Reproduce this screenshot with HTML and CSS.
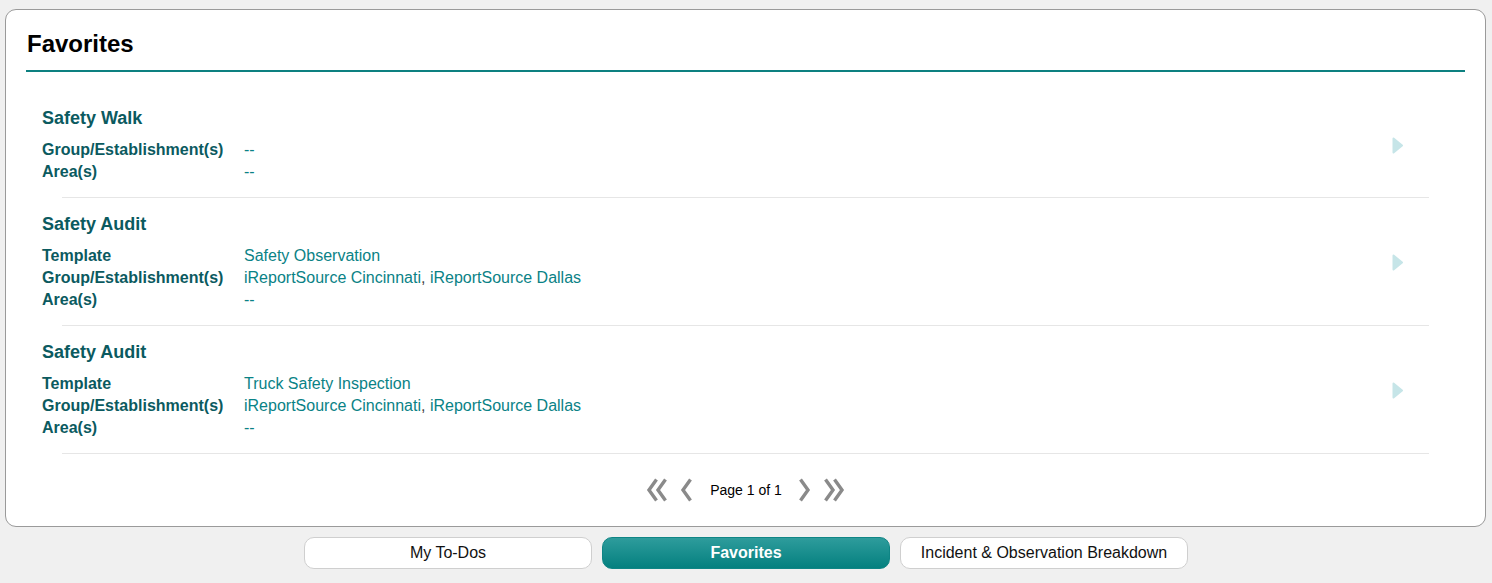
FILE: index.html
```html
<!DOCTYPE html>
<html lang="en">
<head>
<meta charset="utf-8">
<title>Favorites</title>
<link rel="stylesheet" href="styles.css">
</head>
<body>
<main class="card">
  <h1 class="card-title">Favorites</h1>

  <div class="fav-list">
    <div class="fav-item">
      <div class="fav-body">
        <div class="fav-name">Safety Walk</div>
        <div class="fav-row"><span class="fav-label">Group/Establishment(s)</span><span class="fav-value">--</span></div>
        <div class="fav-row"><span class="fav-label">Area(s)</span><span class="fav-value">--</span></div>
      </div>
      <svg class="fav-arrow" width="11" height="17" viewBox="0 0 11 17"><path d="M1.5 1.5 L10 8.5 L1.5 15.5 Z" fill="#c6e5e8" stroke="#c6e5e8" stroke-width="2" stroke-linejoin="round"/></svg>
    </div>
    <div class="divider"></div>

    <div class="fav-item">
      <div class="fav-body">
        <div class="fav-name">Safety Audit</div>
        <div class="fav-row"><span class="fav-label">Template</span><span class="fav-value">Safety Observation</span></div>
        <div class="fav-row"><span class="fav-label">Group/Establishment(s)</span><span class="fav-value">iReportSource Cincinnati<span class="sep">, </span>iReportSource Dallas</span></div>
        <div class="fav-row"><span class="fav-label">Area(s)</span><span class="fav-value">--</span></div>
      </div>
      <svg class="fav-arrow" width="11" height="17" viewBox="0 0 11 17"><path d="M1.5 1.5 L10 8.5 L1.5 15.5 Z" fill="#c6e5e8" stroke="#c6e5e8" stroke-width="2" stroke-linejoin="round"/></svg>
    </div>
    <div class="divider"></div>

    <div class="fav-item">
      <div class="fav-body">
        <div class="fav-name">Safety Audit</div>
        <div class="fav-row"><span class="fav-label">Template</span><span class="fav-value">Truck Safety Inspection</span></div>
        <div class="fav-row"><span class="fav-label">Group/Establishment(s)</span><span class="fav-value">iReportSource Cincinnati<span class="sep">, </span>iReportSource Dallas</span></div>
        <div class="fav-row"><span class="fav-label">Area(s)</span><span class="fav-value">--</span></div>
      </div>
      <svg class="fav-arrow" width="11" height="17" viewBox="0 0 11 17"><path d="M1.5 1.5 L10 8.5 L1.5 15.5 Z" fill="#c6e5e8" stroke="#c6e5e8" stroke-width="2" stroke-linejoin="round"/></svg>
    </div>
    <div class="divider"></div>
  </div>

  <nav class="pager">
    <svg class="pg-double" width="22" height="24" viewBox="0 0 22 24"><path d="M10.5 1.5 L3 12 L10.5 22.5 M19.5 1.5 L12 12 L19.5 22.5" fill="none" stroke="#8a8a8a" stroke-width="3.4"/></svg>
    <svg class="pg-single" width="12" height="24" viewBox="0 0 12 24"><path d="M10.5 1.5 L3 12 L10.5 22.5" fill="none" stroke="#8a8a8a" stroke-width="3.4"/></svg>
    <span class="pg-text">Page 1 of 1</span>
    <svg class="pg-single" width="12" height="24" viewBox="0 0 12 24"><path d="M1.5 1.5 L9 12 L1.5 22.5" fill="none" stroke="#8a8a8a" stroke-width="3.4"/></svg>
    <svg class="pg-double" width="22" height="24" viewBox="0 0 22 24"><path d="M2.5 1.5 L10 12 L2.5 22.5 M11.5 1.5 L19 12 L11.5 22.5" fill="none" stroke="#8a8a8a" stroke-width="3.4"/></svg>
  </nav>
</main>

<div class="tabs">
  <button class="tab">My To-Dos</button>
  <button class="tab active">Favorites</button>
  <button class="tab">Incident &amp; Observation Breakdown</button>
</div>
</body>
</html>
```

FILE: styles.css
```css
html, body {
  margin: 0;
  padding: 0;
}

body {
  background: #f0f0f0;
  font-family: "Liberation Sans", Arial, sans-serif;
  padding-top: 9px;
}

.card {
  box-sizing: border-box;
  margin: 0 6px 0 5px;
  background: #fff;
  border: 1px solid #9a9a9a;
  border-radius: 11px;
  padding: 20px 20px 24px 20px;
}

.card-title {
  margin: 0;
  font-size: 24px;
  line-height: 28px;
  font-weight: bold;
  color: #000;
  padding: 0 0 12px 1px;
  border-bottom: 2px solid #0d8080;
}

.fav-list {
  margin-top: 20px;
  padding-left: 16px;
}

.fav-item {
  display: flex;
  align-items: flex-start;
  padding: 15px 62px 14px 0;
}

.fav-body {
  flex: 1;
}

.fav-name {
  font-size: 18px;
  line-height: 22px;
  font-weight: bold;
  color: #0b5a5f;
  margin-bottom: 10px;
}

.fav-row {
  display: flex;
  font-size: 16px;
  line-height: 22px;
}

.fav-label {
  width: 202px;
  font-weight: bold;
  color: #0b5a5f;
}

.fav-value {
  color: #0a8286;
}

.fav-value .sep {
  color: #444;
}

.fav-arrow {
  align-self: center;
}

.divider {
  height: 1px;
  background: #e6e6e6;
  margin: 0 36px 0 20px;
}

.pager {
  display: flex;
  justify-content: center;
  align-items: center;
  margin-top: 24px;
  height: 24px;
}

.pg-double + .pg-single,
.pg-single + .pg-double {
  margin-left: 12px;
}

.pg-text {
  font-size: 14px;
  color: #000;
  margin: 0 17px 0 18px;
}

.tabs {
  display: flex;
  justify-content: center;
  gap: 10px;
  margin-top: 10px;
}

.tab {
  width: 288px;
  height: 32px;
  background: #fff;
  border: 1px solid #cfcfcf;
  border-radius: 10px;
  font-family: "Liberation Sans", Arial, sans-serif;
  font-size: 16px;
  color: #111;
  padding: 0;
}

.tab.active {
  background: linear-gradient(#2e9c9c, #04807f);
  border-color: #0f8585;
  color: #fff;
  font-weight: bold;
}
```
